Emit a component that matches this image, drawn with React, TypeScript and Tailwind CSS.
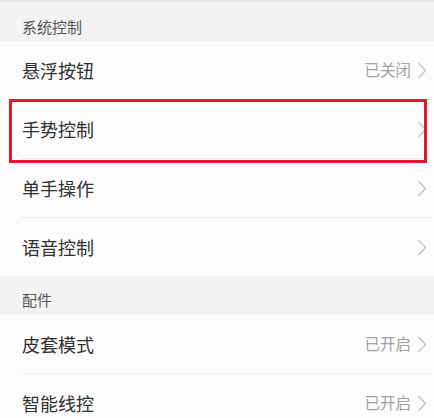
import React from 'react';

interface Item {
  label: string;
  value?: string;
  highlight?: boolean;
}

interface Section {
  title: string;
  items: Item[];
}

const sections: Section[] = [
  {
    title: '系统控制',
    items: [
      { label: '悬浮按钮', value: '已关闭' },
      { label: '手势控制', highlight: true },
      { label: '单手操作' },
      { label: '语音控制' },
    ],
  },
  {
    title: '配件',
    items: [
      { label: '皮套模式', value: '已开启' },
      { label: '智能线控', value: '已开启' },
    ],
  },
];

const Chevron = () => (
  <svg width="10" height="17" viewBox="0 0 10 17" fill="none">
    <polyline points="1.5,1 8.5,8.5 1.5,16" stroke="#c4c4c4" strokeWidth="1.4" />
  </svg>
);

const Row = ({ item, last }: { item: Item; last: boolean }) => (
  <div className="relative">
    <div className="flex h-[58px] items-center pl-[22px] pr-[7px]">
      <span className="flex-1 text-[18px] text-[#303030]">{item.label}</span>
      {item.value && <span className="mr-[6px] text-[15.5px] text-[#a3a3a3]">{item.value}</span>}
      <Chevron />
    </div>
    {!last && <div className="ml-[21px] mr-[4px] h-px bg-[#ececec]" />}
    {item.highlight && (
      <div className="absolute -top-[1px] left-[9px] z-10 h-[64px] w-[418px] border-[3px] border-[#e8142c]" />
    )}
  </div>
);

export default function App() {
  return (
    <div
      className="h-[418px] w-[434px] overflow-hidden bg-[#fcfcfc]"
      style={{ fontFamily: '"Noto Sans CJK SC", "Noto Sans", sans-serif' }}
    >
      <div className="h-[2px] bg-[#e6e6e6]" />
      {sections.map((section, si) => (
        <div key={section.title}>
          <div
            className={`flex h-[39px] items-center bg-[#f3f3f3] pl-[22px] text-[15px] text-[#555555] ${
              si === 0 ? 'pt-[11px]' : 'pt-[10px]'
            }`}
          >
            {section.title}
          </div>
          {section.items.map((item, i) => (
            <Row key={item.label} item={item} last={i === section.items.length - 1 && si === 0} />
          ))}
        </div>
      ))}
    </div>
  );
}
